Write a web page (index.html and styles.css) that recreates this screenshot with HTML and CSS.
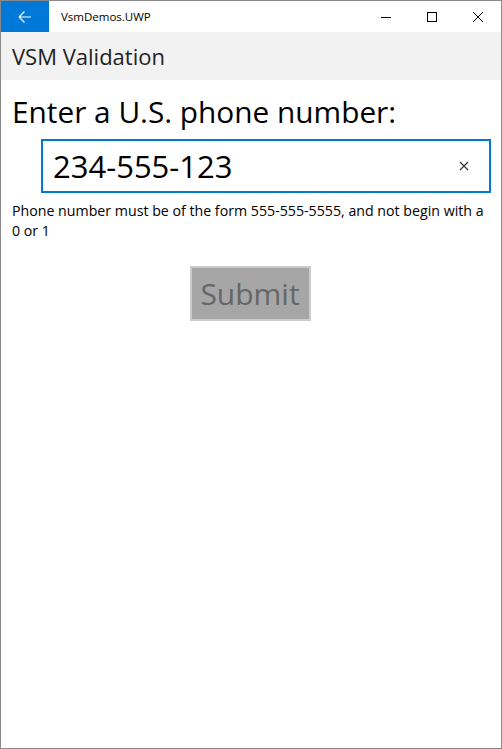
FILE: index.html
```html
<!DOCTYPE html>
<html>
<head>
<meta charset="utf-8">
<link rel="stylesheet" href="styles.css">
</head>
<body>
<div class="window">
  <div class="titlebar">
    <div class="back">
      <svg width="14" height="14" viewBox="0 0 14 14"><path d="M1 7 H13 M1 7 L6.5 1.5 M1 7 L6.5 12.5" stroke="#fff" stroke-width="1.2" fill="none"/></svg>
    </div>
    <div class="apptitle">VsmDemos.UWP</div>
    <div class="caption">
      <div class="cbtn"><svg width="10" height="10" viewBox="0 0 10 10"><path d="M0 5.5 H10" stroke="#000" stroke-width="1"/></svg></div>
      <div class="cbtn"><svg width="10" height="10" viewBox="0 0 10 10"><rect x="0.5" y="0.5" width="9" height="9" stroke="#000" stroke-width="1" fill="none"/></svg></div>
      <div class="cbtn"><svg width="10" height="10" viewBox="0 0 10 10"><path d="M0 0 L10 10 M10 0 L0 10" stroke="#000" stroke-width="1"/></svg></div>
    </div>
  </div>
  <div class="header">VSM Validation</div>
  <div class="content">
    <div class="prompt">Enter a U.S. phone number:</div>
    <div class="textbox">
      <span class="value">234-555-123</span>
      <svg class="clear" width="10" height="10" viewBox="0 0 10 10"><path d="M1 1 L9 9 M9 1 L1 9" stroke="#333" stroke-width="1.1"/></svg>
    </div>
    <div class="error">Phone number must be of the form 555-555-5555, and not begin with a 0 or 1</div>
    <div class="actions"><div class="submit">Submit</div></div>
  </div>
</div>
</body>
</html>
```
FILE: styles.css
```css
html, body { margin: 0; padding: 0; }
body { font-family: "Open Sans", "Noto Sans", sans-serif; background: #fff; }
.window {
  width: 502px; height: 749px; box-sizing: border-box;
  border: 1px solid #8a8a8a; background: #fff;
  display: flex; flex-direction: column;
}
.titlebar { height: 31px; display: flex; align-items: center; background: #fff; }
.back { width: 48px; height: 31px; background: #0078d7; display: flex; align-items: center; justify-content: center; }
.apptitle { margin-left: 12px; font-size: 11.5px; color: #000; flex: 1; }
.caption { display: flex; height: 31px; }
.cbtn { width: 46px; height: 31px; display: flex; align-items: center; justify-content: center; }
.header { height: 48px; background: #f2f2f2; font-size: 22px; color: #222; padding-left: 11px; display: flex; align-items: center; }
.content { padding: 0 11px; }
.prompt { font-size: 29.8px; color: #000; margin-top: 13px; line-height: 38px; }
.textbox {
  margin: 8px 0 0 29px; width: 450px; height: 54px; box-sizing: border-box;
  border: 2px solid #0078d7; display: flex; align-items: center; padding: 0 20px 0 10px;
}
.value { font-size: 31px; color: #000; flex: 1; }
.clear { display: block; }
.error { font-size: 14.2px; color: #000; margin-top: 8px; line-height: 20px; }
.actions { display: flex; justify-content: center; margin-top: 25px; }
.submit {
  width: 121px; height: 55px; box-sizing: border-box; border: 2px solid #cccccc;
  background: #a6a6a6; color: #666; font-size: 30px; display: flex; align-items: center; justify-content: center;
  margin-left: -2px;
}
```
